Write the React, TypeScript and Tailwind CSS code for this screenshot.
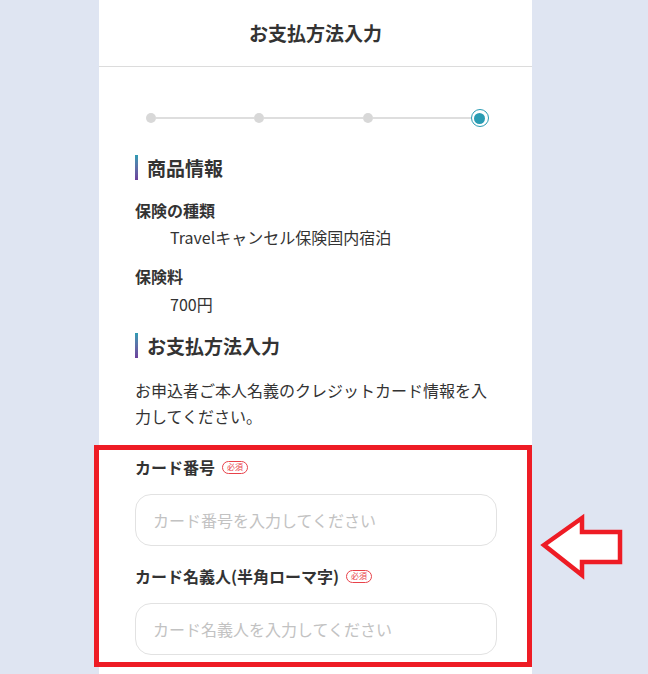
import React from 'react';

const font = { fontFamily: '"Noto Sans CJK JP", "Noto Sans", sans-serif' };

const Required = () => (
  <span className="ml-[7px] inline-flex h-[13px] items-center rounded-full border border-[#e8424a] px-[4px] text-[8px] leading-none text-[#e8424a]">
    必須
  </span>
);

const SectionTitle = ({ children, className = '' }: { children: React.ReactNode; className?: string }) => (
  <div className={`flex items-center ${className}`}>
    <div className="h-[25px] w-[3px] bg-gradient-to-b from-[#2a9cb3] to-[#6b3f9c]" />
    <h2 className="ml-[9px] text-[19px] font-bold leading-[25px] text-[#333]">{children}</h2>
  </div>
);

const Progress = () => (
  <div className="ml-[11px] mr-[7px] mt-[42px] flex h-[18px] items-center">
    <div className="h-[10px] w-[10px] rounded-full bg-[#d8d8d8]" />
    <div className="h-[2px] flex-1 bg-[#dedede]" />
    <div className="h-[10px] w-[10px] rounded-full bg-[#d8d8d8]" />
    <div className="h-[2px] flex-1 bg-[#dedede]" />
    <div className="h-[10px] w-[10px] rounded-full bg-[#d8d8d8]" />
    <div className="h-[2px] flex-1 bg-[#dedede]" />
    <div className="flex h-[18px] w-[18px] items-center justify-center rounded-full border-[1.5px] border-[#2a9cb3] bg-white">
      <div className="h-[11px] w-[11px] rounded-full bg-[#2a9cb3]" />
    </div>
  </div>
);

const Field = ({ label, placeholder, className = '' }: { label: string; placeholder: string; className?: string }) => (
  <div className={className}>
    <div className="flex items-center">
      <span className="text-[16px] font-bold leading-[22px] text-[#333]">{label}</span>
      <Required />
    </div>
    <input
      className="mt-[16px] h-[52px] w-[362px] rounded-[16px] border border-[#e2e2e2] bg-white px-[17px] text-[16px] text-[#333] outline-none placeholder:text-[#c2c2c2]"
      placeholder={placeholder}
      style={font}
    />
  </div>
);

export default function App() {
  return (
    <div className="relative min-h-screen overflow-hidden bg-[#dfe5f2]" style={font}>
      <div className="ml-[99px] min-h-[674px] w-[433px] bg-white">
        <header className="flex h-[67px] items-center justify-center border-b border-[#dcdcdc]">
          <h1 className="text-[19px] font-bold text-[#333]">お支払方法入力</h1>
        </header>

        <div className="px-[36px]">
          <Progress />

          <SectionTitle className="mt-[28px]">商品情報</SectionTitle>

          <div className="mt-[18px] text-[16px] font-bold leading-[24px] text-[#333]">保険の種類</div>
          <div className="mt-[3px] pl-[35px] text-[16px] leading-[24px] text-[#333]">Travelキャンセル保険国内宿泊</div>

          <div className="mt-[15px] text-[16px] font-bold leading-[24px] text-[#333]">保険料</div>
          <div className="mt-[4px] pl-[35px] text-[16px] leading-[24px] text-[#333]">700円</div>

          <SectionTitle className="mt-[17px]">お支払方法入力</SectionTitle>

          <p className="mt-[19px] text-[16px] leading-[26px] text-[#333]">
            お申込者ご本人名義のクレジットカード情報を入力してください。
          </p>

          <Field className="mt-[27px]" label="カード番号" placeholder="カード番号を入力してください" />
          <Field className="mt-[19px]" label="カード名義人(半角ローマ字)" placeholder="カード名義人を入力してください" />
        </div>
      </div>

      {/* annotation overlay */}
      <div className="pointer-events-none absolute left-[94px] top-[445px] h-[222px] w-[438px] border-[5px] border-[#ee1c25]" />
      <svg className="pointer-events-none absolute left-[538px] top-[512px]" width="88" height="70" viewBox="538 512 88 70">
        <polygon
          points="544,545 582,518 582,532 620,532 620,562 582,562 582,575"
          fill="#fff"
          stroke="#ee1c25"
          strokeWidth="4.5"
          strokeLinejoin="miter"
        />
      </svg>
    </div>
  );
}
